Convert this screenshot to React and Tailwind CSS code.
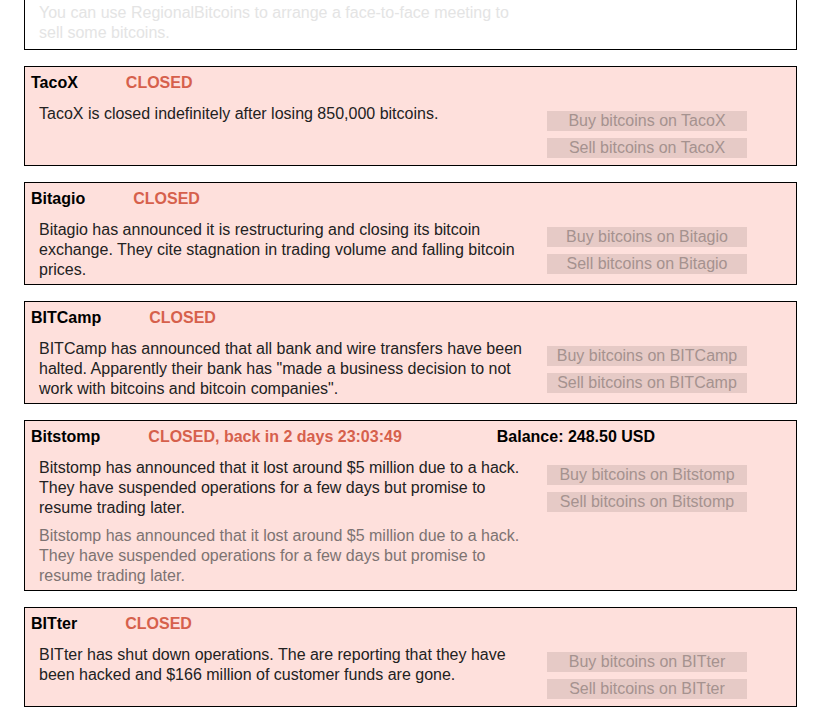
import React from "react";

const exchanges = [
	{
		name: "TacoX",
		status: "CLOSED",
		text: ["TacoX is closed indefinitely after losing 850,000 bitcoins."],
	},
	{
		name: "Bitagio",
		status: "CLOSED",
		text: [
			"Bitagio has announced it is restructuring and closing its bitcoin exchange. They cite stagnation in trading volume and falling bitcoin prices.",
		],
	},
	{
		name: "BITCamp",
		status: "CLOSED",
		text: [
			'BITCamp has announced that all bank and wire transfers have been halted. Apparently their bank has "made a business decision to not work with bitcoins and bitcoin companies".',
		],
	},
	{
		name: "Bitstomp",
		status: "CLOSED, back in 2 days 23:03:49",
		balance: "Balance: 248.50 USD",
		text: [
			"Bitstomp has announced that it lost around $5 million due to a hack. They have suspended operations for a few days but promise to resume trading later.",
		],
		note: "Bitstomp has announced that it lost around $5 million due to a hack. They have suspended operations for a few days but promise to resume trading later.",
	},
	{
		name: "BITter",
		status: "CLOSED",
		text: [
			"BITter has shut down operations. The are reporting that they have been hacked and $166 million of customer funds are gone.",
		],
	},
];

function ExchangeBox({ ex }) {
	return (
		<div className="border border-black bg-[#fee0dc]">
			<div className="flex pl-[6px] pt-[6px] text-[16px] leading-[20px] font-bold">
				<span className="text-black">{ex.name}</span>
				<span className="ml-[48px] text-[#d6604c]">{ex.status}</span>
				{ex.balance && (
					<span className="ml-[95px] text-black">{ex.balance}</span>
				)}
			</div>
			<div className="flex justify-between pl-[14px] pt-[11px] pb-[4px]">
				<div className="w-[490px] text-[16px] leading-[20px]">
					{ex.text.map((t, i) => (
						<p key={i} className="text-[#222]">
							{t}
						</p>
					))}
					{ex.note && (
						<p className="mt-[8px] text-[#7d7372]">{ex.note}</p>
					)}
				</div>
				<div className="mr-[49px] mt-[7px] mb-[3px] flex w-[200px] flex-col gap-[7px]">
					<div className="h-[20px] bg-[#e6cac6] text-center text-[16px] leading-[20px] text-[#a5928f]">
						Buy bitcoins on {ex.name}
					</div>
					<div className="h-[20px] bg-[#e6cac6] text-center text-[16px] leading-[20px] text-[#a5928f]">
						Sell bitcoins on {ex.name}
					</div>
				</div>
			</div>
		</div>
	);
}

export default function App() {
	return (
		<div
			className="min-h-screen bg-white px-6 pb-6"
			style={{ fontFamily: '"Liberation Sans", Arial, sans-serif' }}
		>
			<div className="flex flex-col gap-4">
				{/* regional box, cut at the top */}
				<div className="border border-t-0 border-black bg-white pl-[14px] pt-[3px] pb-[6px]">
					<p className="w-[490px] text-[16px] leading-[20px] text-[#e4e4e4]">
						You can use RegionalBitcoins to arrange a face-to-face meeting to
						sell some bitcoins.
					</p>
				</div>
				{exchanges.map((ex) => (
					<ExchangeBox key={ex.name} ex={ex} />
				))}
			</div>
		</div>
	);
}
